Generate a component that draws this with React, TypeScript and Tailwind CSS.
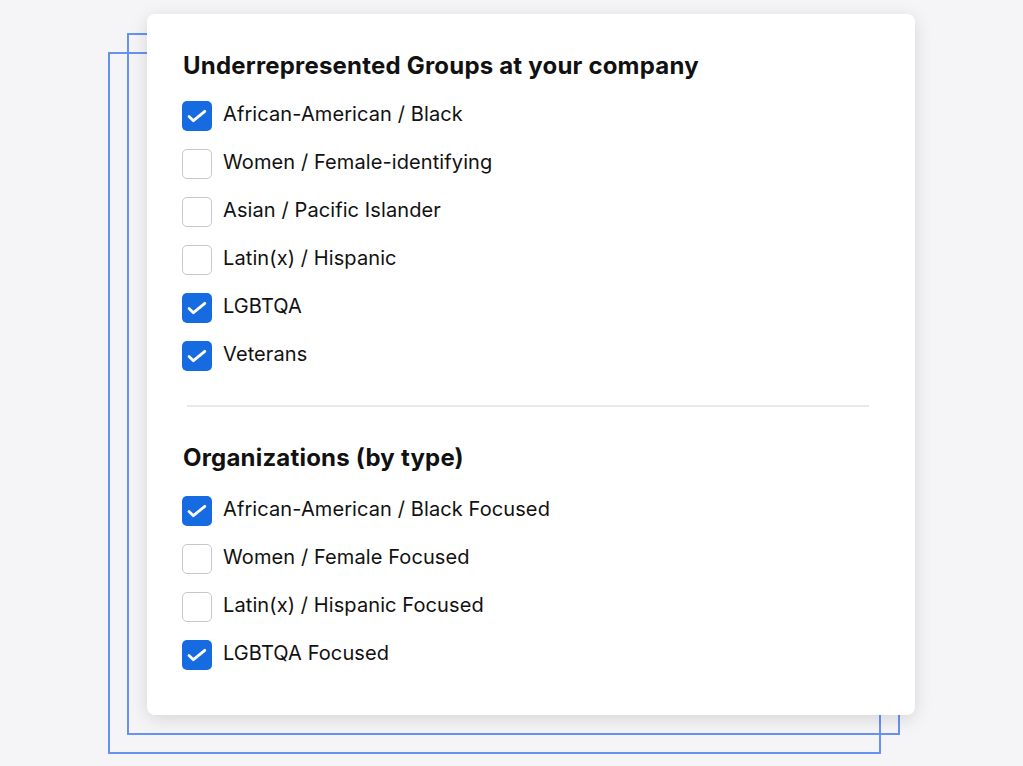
import React, { useState } from "react";

type Item = { label: string; checked: boolean };

const groups: Item[] = [
  { label: "African-American / Black", checked: true },
  { label: "Women / Female-identifying", checked: false },
  { label: "Asian / Pacific Islander", checked: false },
  { label: "Latin(x) / Hispanic", checked: false },
  { label: "LGBTQA", checked: true },
  { label: "Veterans", checked: true },
];

const orgs: Item[] = [
  { label: "African-American / Black Focused", checked: true },
  { label: "Women / Female Focused", checked: false },
  { label: "Latin(x) / Hispanic Focused", checked: false },
  { label: "LGBTQA Focused", checked: true },
];

function Checkbox({ checked, onToggle }: { checked: boolean; onToggle: () => void }) {
  return (
    <button
      type="button"
      onClick={onToggle}
      className={
        checked
          ? "flex h-[30px] w-[30px] shrink-0 items-center justify-center rounded-[5px] bg-[#176be0]"
          : "flex h-[30px] w-[30px] shrink-0 items-center justify-center rounded-[5px] border-[1.5px] border-[#c9c9cd] bg-white"
      }
    >
      {checked && (
        <svg width="30" height="30" viewBox="0 0 30 30" fill="none">
          <path
            d="M7 15.6l4.4 4.1 11.4-9.4"
            stroke="white"
            strokeWidth="2.8"
            strokeLinecap="round"
            strokeLinejoin="round"
          />
        </svg>
      )}
    </button>
  );
}

function CheckList({ initial }: { initial: Item[] }) {
  const [items, setItems] = useState(initial);
  return (
    <div className="flex flex-col gap-[18px]">
      {items.map((it, i) => (
        <label key={it.label} className="flex h-[30px] items-center gap-[11px]">
          <Checkbox
            checked={it.checked}
            onToggle={() =>
              setItems((prev) => prev.map((p, j) => (j === i ? { ...p, checked: !p.checked } : p)))
            }
          />
          <span className="mb-[4px] text-[20px] leading-[30px] tracking-[0.1px] text-[#111111]">
            {it.label}
          </span>
        </label>
      ))}
    </div>
  );
}

export default function App() {
  return (
    <div
      className="min-h-[766px] w-full bg-[#f5f5f7]"
      style={{ fontFamily: "Inter, 'Noto Sans', sans-serif" }}
    >
      <div className="relative ml-[147px] w-[768px] pt-[14px]">
        {/* stacked frames behind the card */}
        <div className="absolute left-[-39px] top-[52px] h-[702px] w-[773px] border-2 border-[#6692f2]" />
        <div className="absolute left-[-20px] top-[33px] h-[702px] w-[773px] border-2 border-[#6692f2]" />

        <div className="relative h-[701px] rounded-[8px] bg-white px-[35px] pt-[37px] shadow-[0_4px_18px_rgba(0,0,0,0.13)]">
          <h2 className="pl-[1px] text-[24px] font-bold leading-[29px] tracking-[0.2px] text-[#111111]">
            Underrepresented Groups at your company
          </h2>
          <div className="mt-[21px]">
            <CheckList initial={groups} />
          </div>

          <div className="ml-[5px] mt-[34px] h-[2px] w-[682px] bg-[#e9e9eb]" />

          <h2 className="mt-[36px] pl-[1px] text-[24px] font-bold leading-[29px] tracking-[0.2px] text-[#111111]">
            Organizations (by type)
          </h2>
          <div className="mt-[24px]">
            <CheckList initial={orgs} />
          </div>
        </div>
      </div>
    </div>
  );
}
